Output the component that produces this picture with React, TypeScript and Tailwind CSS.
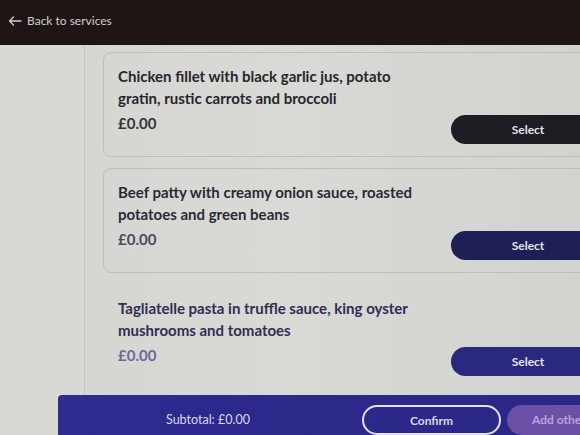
import React from 'react';

type Dish = {
  id: number;
  name: string;
  price: string;
  titleColor: string;
  priceColor: string;
  buttonColor: string;
};

const dishes: Dish[] = [
  {
    id: 1,
    name: 'Chicken fillet with black garlic jus, potato gratin, rustic carrots and broccoli',
    price: '£0.00',
    titleColor: 'text-[#26262c]',
    priceColor: 'text-[#34343a]',
    buttonColor: 'bg-[#1e1d24]',
  },
  {
    id: 2,
    name: 'Beef patty with creamy onion sauce, roasted potatoes and green beans',
    price: '£0.00',
    titleColor: 'text-[#292a36]',
    priceColor: 'text-[#4c4b5e]',
    buttonColor: 'bg-[#1f1f58]',
  },
  {
    id: 3,
    name: 'Tagliatelle pasta in truffle sauce, king oyster mushrooms and tomatoes',
    price: '£0.00',
    titleColor: 'text-[#302e52]',
    priceColor: 'text-[#6c66a0]',
    buttonColor: 'bg-[#2b2880]',
  },
];

const DishCard = ({ dish, bordered }: { dish: Dish; bordered: boolean }) => (
  <div
    className={`w-[520px] h-[105px] rounded-lg flex items-end justify-between pl-[14px] pr-[21px] pb-3 ${
      bordered ? 'border border-[#bdbdbb]' : 'border border-transparent'
    }`}
  >
    <div className="self-start pt-[12px] w-[312px]">
      <p className={`text-[15px] leading-[22px] font-bold ${dish.titleColor}`}>{dish.name}</p>
      <p className={`text-[15px] leading-[22px] font-bold mt-[3px] ${dish.priceColor}`}>{dish.price}</p>
    </div>
    <button
      className={`w-[150px] h-[29px] shrink-0 rounded-full text-[12px] font-bold text-[#e4e4ea] pl-[4px] ${dish.buttonColor}`}
    >
      Select
    </button>
  </div>
);

export default function App() {
  return (
    <div
      className="w-[580px] h-[435px] overflow-hidden flex flex-col bg-[#d6d6d2]"
      style={{ fontFamily: 'Lato, "Noto Sans", sans-serif' }}
    >
      {/* Header */}
      <div className="h-[45px] shrink-0 bg-[#1d1614] flex items-center pl-[8px] pb-[4px]">
        <button className="flex items-center gap-[5px] text-[#cfcfd2] text-[12px]">
          <svg width="14" height="10" viewBox="0 0 14 10" fill="none" stroke="currentColor" strokeWidth="1.3">
            <path d="M13 5H1.5M5.5 1L1.5 5l4 4" strokeLinecap="round" strokeLinejoin="round" />
          </svg>
          Back to services
        </button>
      </div>

      {/* Body */}
      <div className="flex-1 flex relative bg-gradient-to-r from-[#d4d4d0] via-[#d9d9d5] to-[#d2d2ce]">
        <div className="w-[85px] shrink-0 border-r border-[#c4c4c2] bg-[#d8d8d5]" />
        <div className="flex flex-col gap-[11px] pl-[18px] pt-[7px]">
          {dishes.map((d, i) => (
            <DishCard key={d.id} dish={d} bordered={i < 2} />
          ))}
        </div>

        {/* Footer bar */}
        <div className="absolute left-[58px] bottom-0 w-[600px] h-[40px] bg-gradient-to-r from-[#2e2a8f] to-[#2a2785] rounded-tl-sm flex items-center pt-[10px]">
          <span className="w-[304px] shrink-0 pl-[108px] text-[12.5px] text-[#d8d8ee]">Subtotal: £0.00</span>
          <button className="w-[139px] h-[30px] shrink-0 rounded-full border-2 border-[#e2e2f0] text-[12px] font-bold text-[#d8d8ea] pt-[2px]">
            Confirm
          </button>
          <button className="w-[110px] h-[30px] shrink-0 ml-[6px] rounded-l-full bg-[#6c50a8] text-[12px] font-bold text-[#b8a5de] text-left pl-[25px]">
            Add other
          </button>
        </div>
      </div>
    </div>
  );
}
